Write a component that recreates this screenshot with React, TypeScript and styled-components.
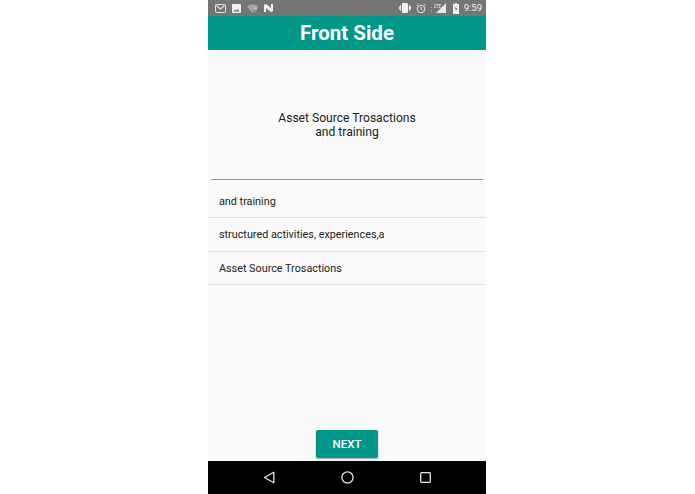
import React from 'react'
import styled, {createGlobalStyle} from 'styled-components'

const Global = createGlobalStyle`
    html, body {
        margin: 0;
        padding: 0;
        background: #fff;
        font-family: Roboto, 'Noto Sans', sans-serif;
    }
`

const Phone = styled.div`
    width: 278px;
    height: 494px;
    margin-left: 208px;
    display: flex;
    flex-direction: column;
    background: #fafafa;
`

const StatusBar = styled.div`
    height: 16px;
    flex: none;
    background: #757575;
    display: flex;
    align-items: center;
    justify-content: space-between;
    padding: 0 4px 0 7px;
`

const StatusGroup = styled.div<{gap: number}>`
    display: flex;
    align-items: center;
    gap: ${({gap}) => gap}px;
`

const Clock = styled.span`
    color: #f2f2f2;
    font-size: 9.5px;
    line-height: 16px;
`

const AppBar = styled.header`
    height: 34px;
    flex: none;
    background: #009688;
    display: flex;
    align-items: center;
    justify-content: center;
    color: #fff;
    font-size: 20.5px;
    font-weight: 700;
`

const Question = styled.div`
    height: 109px;
    flex: none;
    margin: 0 3px;
    padding-top: 20px;
    border-bottom: 1px solid #999;
    display: flex;
    align-items: center;
    justify-content: center;
    text-align: center;
    color: #212121;
    font-size: 12.1px;
    line-height: 14px;
`

const Options = styled.ul`
    list-style: none;
    margin: 5px 0 0;
    padding: 0;
    flex: 1;
`

const Option = styled.li`
    height: 31.8px;
    padding: 0.6px 0 0 11px;
    display: flex;
    align-items: center;
    border-bottom: 1px solid #e2e2e2;
    color: #212121;
    font-size: 10.8px;
`

const Footer = styled.div`
    flex: none;
    display: flex;
    justify-content: center;
    padding-bottom: 3px;
`

const NextButton = styled.button`
    width: 62px;
    height: 28px;
    border: 0;
    border-radius: 2px;
    padding: 0;
    background: #009688;
    color: #fff;
    font-family: inherit;
    font-size: 11.5px;
    font-weight: 500;
    box-shadow: 0 1px 2px rgba(0, 0, 0, 0.35);
`

const NavBar = styled.nav`
    height: 33px;
    flex: none;
    background: #000;
    display: flex;
    align-items: center;
    justify-content: center;
    gap: 66px;
`

const App = () => {
    const options = ['and training', 'structured activities, experiences,a', 'Asset Source Trosactions']

    return (
        <Phone>
            <Global />
            <StatusBar>
                <StatusGroup gap={6}>
                    {/* mail */}
                    <svg width="11" height="9" viewBox="0 0 11 9">
                        <rect x=".5" y=".5" width="10" height="8" rx=".8" fill="#757575" stroke="#e4e4e4" />
                        <path d="M1.5 1.5L5.5 5l4-3.5" fill="none" stroke="#e4e4e4" strokeWidth="1.2" />
                    </svg>
                    {/* picture */}
                    <svg width="9" height="9" viewBox="0 0 9 9">
                        <rect width="9" height="9" rx="1" fill="#f0f0f0" />
                        <path d="M1.5 7.5l1.6-2 1.2 1.2 1.4-1.8 1.8 2.6z" fill="#6a6a6a" />
                    </svg>
                    {/* wifi, no connection */}
                    <svg width="11" height="9" viewBox="0 0 11 9">
                        <path d="M0 2.5C3-.6 8-.6 11 2.5L7 7.2 5.5 9z" fill="#a6a6a6" />
                        <path d="M7 4.2h2.4v.9L8.4 6.2M8.3 7.2v1" fill="none" stroke="#e0e0e0" strokeWidth=".8" />
                    </svg>
                    {/* N */}
                    <svg width="9" height="8" viewBox="0 0 9 8">
                        <path d="M0 1l2-1 5 4V0h2v7L7 8 2 4v4H0z" fill="#f2f2f2" />
                    </svg>
                </StatusGroup>
                <StatusGroup gap={5}>
                    {/* vibrate */}
                    <svg width="12" height="10" viewBox="0 0 12 10">
                        <rect x="3" width="6" height="10" rx="1" fill="#efefef" />
                        <path d="M1.6 2.2v5.6M.4 3.4v3.2M10.4 2.2v5.6M11.6 3.4v3.2" stroke="#efefef" />
                    </svg>
                    {/* alarm */}
                    <svg width="10" height="11" viewBox="0 0 10 11">
                        <circle cx="5" cy="6" r="3.8" fill="none" stroke="#e8e8e8" />
                        <path d="M5 3.8v2.4l1.5 1M.5 2.6L2.2 1M9.5 2.6L7.8 1" fill="none" stroke="#e8e8e8" strokeWidth=".9" />
                    </svg>
                    {/* signal with LTE badge */}
                    <svg width="17" height="11" viewBox="0 0 17 11">
                        <path d="M0 4h1v1H0zM0 7h1v1H0z" fill="#bdbdbd" />
                        <path d="M15 0v10H5z" fill="#e8e8e8" />
                        <path d="M3 0h7v5H3z" fill="#757575" />
                        <text x="3" y="4.5" fontSize="4.5" fontFamily="Roboto, sans-serif" fill="#efefef">LTE</text>
                    </svg>
                    {/* battery */}
                    <svg width="6" height="11" viewBox="0 0 6 11">
                        <path d="M2 0h2v1h2v10H0V1h2z" fill="#f2f2f2" />
                        <path d="M3.4 2.5L1.8 6h1.1l-.3 2.5L4.3 5H3.1z" fill="#757575" />
                    </svg>
                    <Clock>9:59</Clock>
                </StatusGroup>
            </StatusBar>
            <AppBar>Front Side</AppBar>
            <Question>
                <div>Asset Source Trosactions<br />and training</div>
            </Question>
            <Options>
                {options.map(option => <Option key={option}>{option}</Option>)}
            </Options>
            <Footer>
                <NextButton>NEXT</NextButton>
            </Footer>
            <NavBar>
                <svg width="12" height="13" viewBox="0 0 12 13">
                    <path d="M10.8 1.2v10.6L1.5 6.5z" fill="none" stroke="#e6e6e6" strokeWidth="1.3" strokeLinejoin="round" />
                </svg>
                <svg width="13" height="13" viewBox="0 0 13 13">
                    <circle cx="6.5" cy="6.5" r="5.6" fill="none" stroke="#e6e6e6" strokeWidth="1.3" />
                </svg>
                <svg width="11" height="11" viewBox="0 0 11 11">
                    <rect x=".7" y=".7" width="9.6" height="9.6" rx=".8" fill="none" stroke="#e6e6e6" strokeWidth="1.3" />
                </svg>
            </NavBar>
        </Phone>
    )
}

export default App
